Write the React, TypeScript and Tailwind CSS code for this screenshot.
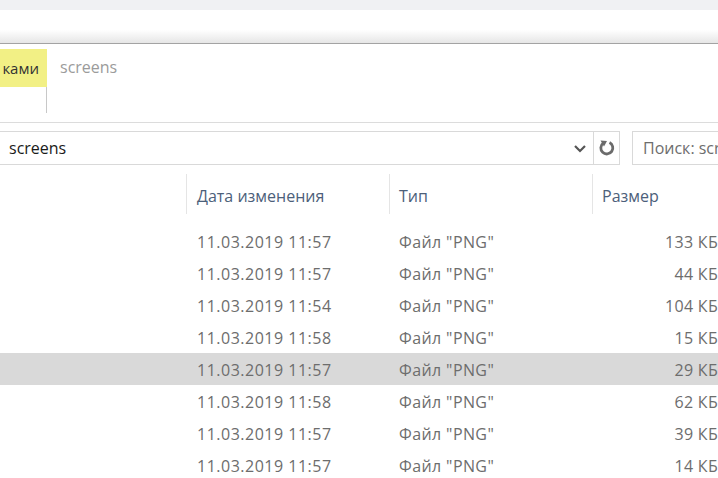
import React from 'react';

const rows = [
  { date: '11.03.2019 11:57', size: '133 КБ' },
  { date: '11.03.2019 11:57', size: '44 КБ' },
  { date: '11.03.2019 11:54', size: '104 КБ' },
  { date: '11.03.2019 11:58', size: '15 КБ' },
  { date: '11.03.2019 11:57', size: '29 КБ', selected: true },
  { date: '11.03.2019 11:58', size: '62 КБ' },
  { date: '11.03.2019 11:57', size: '39 КБ' },
  { date: '11.03.2019 11:57', size: '14 КБ' },
];

const App = () => {
  return (
    <div
      className="w-[718px] h-[478px] overflow-hidden bg-white"
      style={{ fontFamily: '"Open Sans", "Noto Sans", sans-serif' }}
    >
      {/* Top strip */}
      <div className="h-[10px] bg-[#f0f1f3]" />
      <div className="h-[34px] bg-gradient-to-b from-white from-60% to-[#e6e6e6] border-b border-[#a3a3a3]" />

      {/* Ribbon area */}
      <div className="h-[79px] flex border-b border-[#dcdcdc]">
        <div className="w-[47px] flex flex-col pt-[5px]">
          <div className="h-[38px] bg-[#f2f085] flex items-center justify-end pr-[8px] text-[15px] text-[#333]">
            ками
          </div>
          <div className="h-[26px] border-r border-[#c8c8c8]" />
        </div>
        <div className="pl-[13px] pt-[11px] text-[16px] text-[#9b9b9b]">screens</div>
      </div>

      {/* Address bar */}
      <div className="mt-[8px] h-[34px] flex">
        <div className="h-[34px] w-[620px] flex border border-l-0 border-[#d9d9d9]">
          <div className="flex-1 flex items-center pl-[9px] text-[16px] text-[#1a1a1a]">screens</div>
          <div className="w-[26px] flex items-center justify-center">
            <svg width="14" height="9" viewBox="0 0 14 9">
              <path d="M2 2 L7 7 L12 2" fill="none" stroke="#555" strokeWidth="2.2" />
            </svg>
          </div>
          <div className="w-[26px] border-l border-[#d9d9d9] flex items-center justify-center">
            <svg width="18" height="18" viewBox="0 0 18 18">
              <path d="M11.5 3.6 A6 6 0 1 1 5.2 4.2" fill="none" stroke="#6b6b6b" strokeWidth="2.8" />
              <path d="M2.5 1.5 L9 2 L6 7.5 Z" fill="#6b6b6b" />
            </svg>
          </div>
        </div>
        <div className="ml-[12px] h-[34px] flex-1 border border-r-0 border-[#d9d9d9] flex items-center pl-[10px] text-[16px] text-[#6d6d6d] whitespace-nowrap overflow-hidden">
          Поиск: screens
        </div>
      </div>

      {/* Column headers */}
      <div className="mt-[9px] h-[40px] flex text-[16px] text-[#4c607a]">
        <div className="w-[186px]" />
        <div className="w-[203px] border-l border-[#e5e5e5] flex items-center pt-[3px] pl-[10px]">Дата изменения</div>
        <div className="w-[203px] border-l border-[#e5e5e5] flex items-center pt-[3px] pl-[9px]">Тип</div>
        <div className="flex-1 border-l border-[#e5e5e5] flex items-center pt-[3px] pl-[9px] whitespace-nowrap">Размер</div>
      </div>

      {/* Rows */}
      <div className="mt-[11px] text-[16px] text-[#6d6d6d]">
        {rows.map((r, i) => (
          <div key={i} className={`h-[32px] flex items-center pt-[1px] ${r.selected ? 'bg-[#d9d9d9]' : ''}`}>
            <div className="w-[197px] shrink-0" />
            <div className="w-[202px] shrink-0 whitespace-nowrap tracking-[0.5px]">{r.date}</div>
            <div className="w-[200px] shrink-0 whitespace-nowrap tracking-[0.4px]">Файл "PNG"</div>
            <div className="flex-1 text-right whitespace-nowrap tracking-[0.3px]">{r.size}</div>
          </div>
        ))}
      </div>
    </div>
  );
};

export default App;
